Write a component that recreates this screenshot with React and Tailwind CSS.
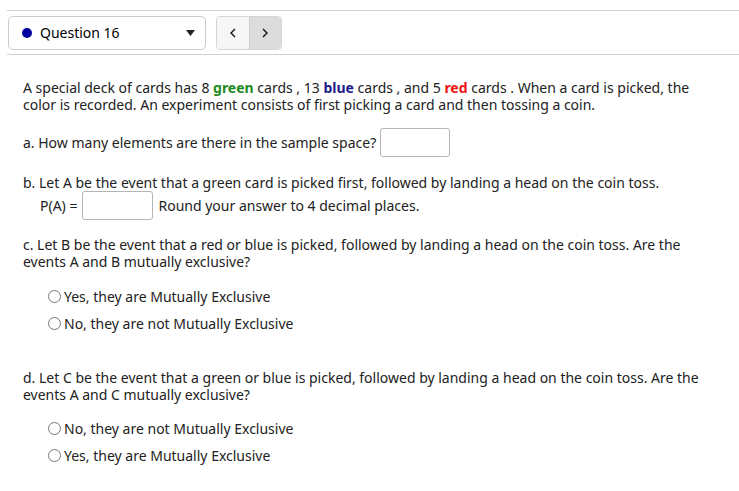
import React from 'react';

function Radio({ label }) {
  return (
    <label className="flex items-center h-[27px]">
      <span className="w-[13px] h-[13px] rounded-full border border-[#767676] bg-white mr-[3px]"></span>
      <span>{label}</span>
    </label>
  );
}

function Box({ className }) {
  return <span className={'inline-block h-[29px] border border-[#b5b5b5] rounded-[3px] bg-white align-middle ' + className}></span>;
}

export default function App() {
  return (
    <div className="bg-white w-[739px] h-[491px] pt-[10px] text-[14px] text-[#222] leading-[17px]" style={{ fontFamily: '"Noto Sans", sans-serif' }}>
      {/* question nav bar */}
      <div className="ml-[7px] border-t border-b border-[#cfcfcf] h-[45px] flex items-center pl-px">
        <div className="w-[198px] h-[34px] border border-[#ccc] rounded-[5px] flex items-center pl-[13px] pr-[10px]">
          <span className="w-[10px] h-[10px] rounded-full bg-[#00009c] mr-[8px]"></span>
          <span className="flex-1 text-black">Question 16</span>
          <svg width="9" height="6" viewBox="0 0 9 6"><path d="M0 0h9L4.5 6z" fill="#222" /></svg>
        </div>
        <div className="ml-[10px] w-[66px] h-[34px] border border-[#d4d4d4] rounded-[4px] flex overflow-hidden">
          <div className="flex-1 bg-[#f6f6f6] flex items-center justify-center border-r border-[#d0d0d0]">
            <svg width="6" height="10" viewBox="0 0 6 10"><path d="M5 1L1 5l4 4" fill="none" stroke="#111" strokeWidth="1.4" /></svg>
          </div>
          <div className="flex-1 bg-[#dcdcdc] flex items-center justify-center">
            <svg width="6" height="10" viewBox="0 0 6 10"><path d="M1 1l4 4-4 4" fill="none" stroke="#111" strokeWidth="1.4" /></svg>
          </div>
        </div>
      </div>

      <div className="pl-[23px] pr-[24px]">
        <p className="mt-[24px]">
          A special deck of cards has 8 <b className="text-[#1f8a1f]">green</b> cards , 13 <b className="text-[#1c1c88]">blue</b> cards , and 5 <b className="text-[#ee1111]">red</b> cards . When a card is picked, the color is recorded. An experiment consists of first picking a card and then tossing a coin.
        </p>

        <div className="mt-[15px] flex items-center">
          <span>a. How many elements are there in the sample space?</span>
          <Box className="ml-[4px] w-[70px]" />
        </div>

        <p className="mt-[17px]">b. Let A be the event that a green card is picked first, followed by landing a head on the coin toss.</p>
        <div className="mt-0 pl-[17px] flex items-center">
          <span>P(A) =</span>
          <Box className="ml-[5px] w-[71px] h-[28px]" />
          <span className="ml-[5px]">Round your answer to 4 decimal places.</span>
        </div>

        <p className="mt-[16px]">c. Let B be the event that a red or blue is picked, followed by landing a head on the coin toss. Are the events A and B mutually exclusive?</p>
        <div className="mt-[13px] pl-[25px]">
          <Radio label="Yes, they are Mutually Exclusive" />
          <Radio label="No, they are not Mutually Exclusive" />
        </div>

        <p className="mt-[32px]">d. Let C be the event that a green or blue is picked, followed by landing a head on the coin toss. Are the events A and C mutually exclusive?</p>
        <div className="mt-[12px] pl-[25px]">
          <Radio label="No, they are not Mutually Exclusive" />
          <Radio label="Yes, they are Mutually Exclusive" />
        </div>
      </div>
    </div>
  );
}
